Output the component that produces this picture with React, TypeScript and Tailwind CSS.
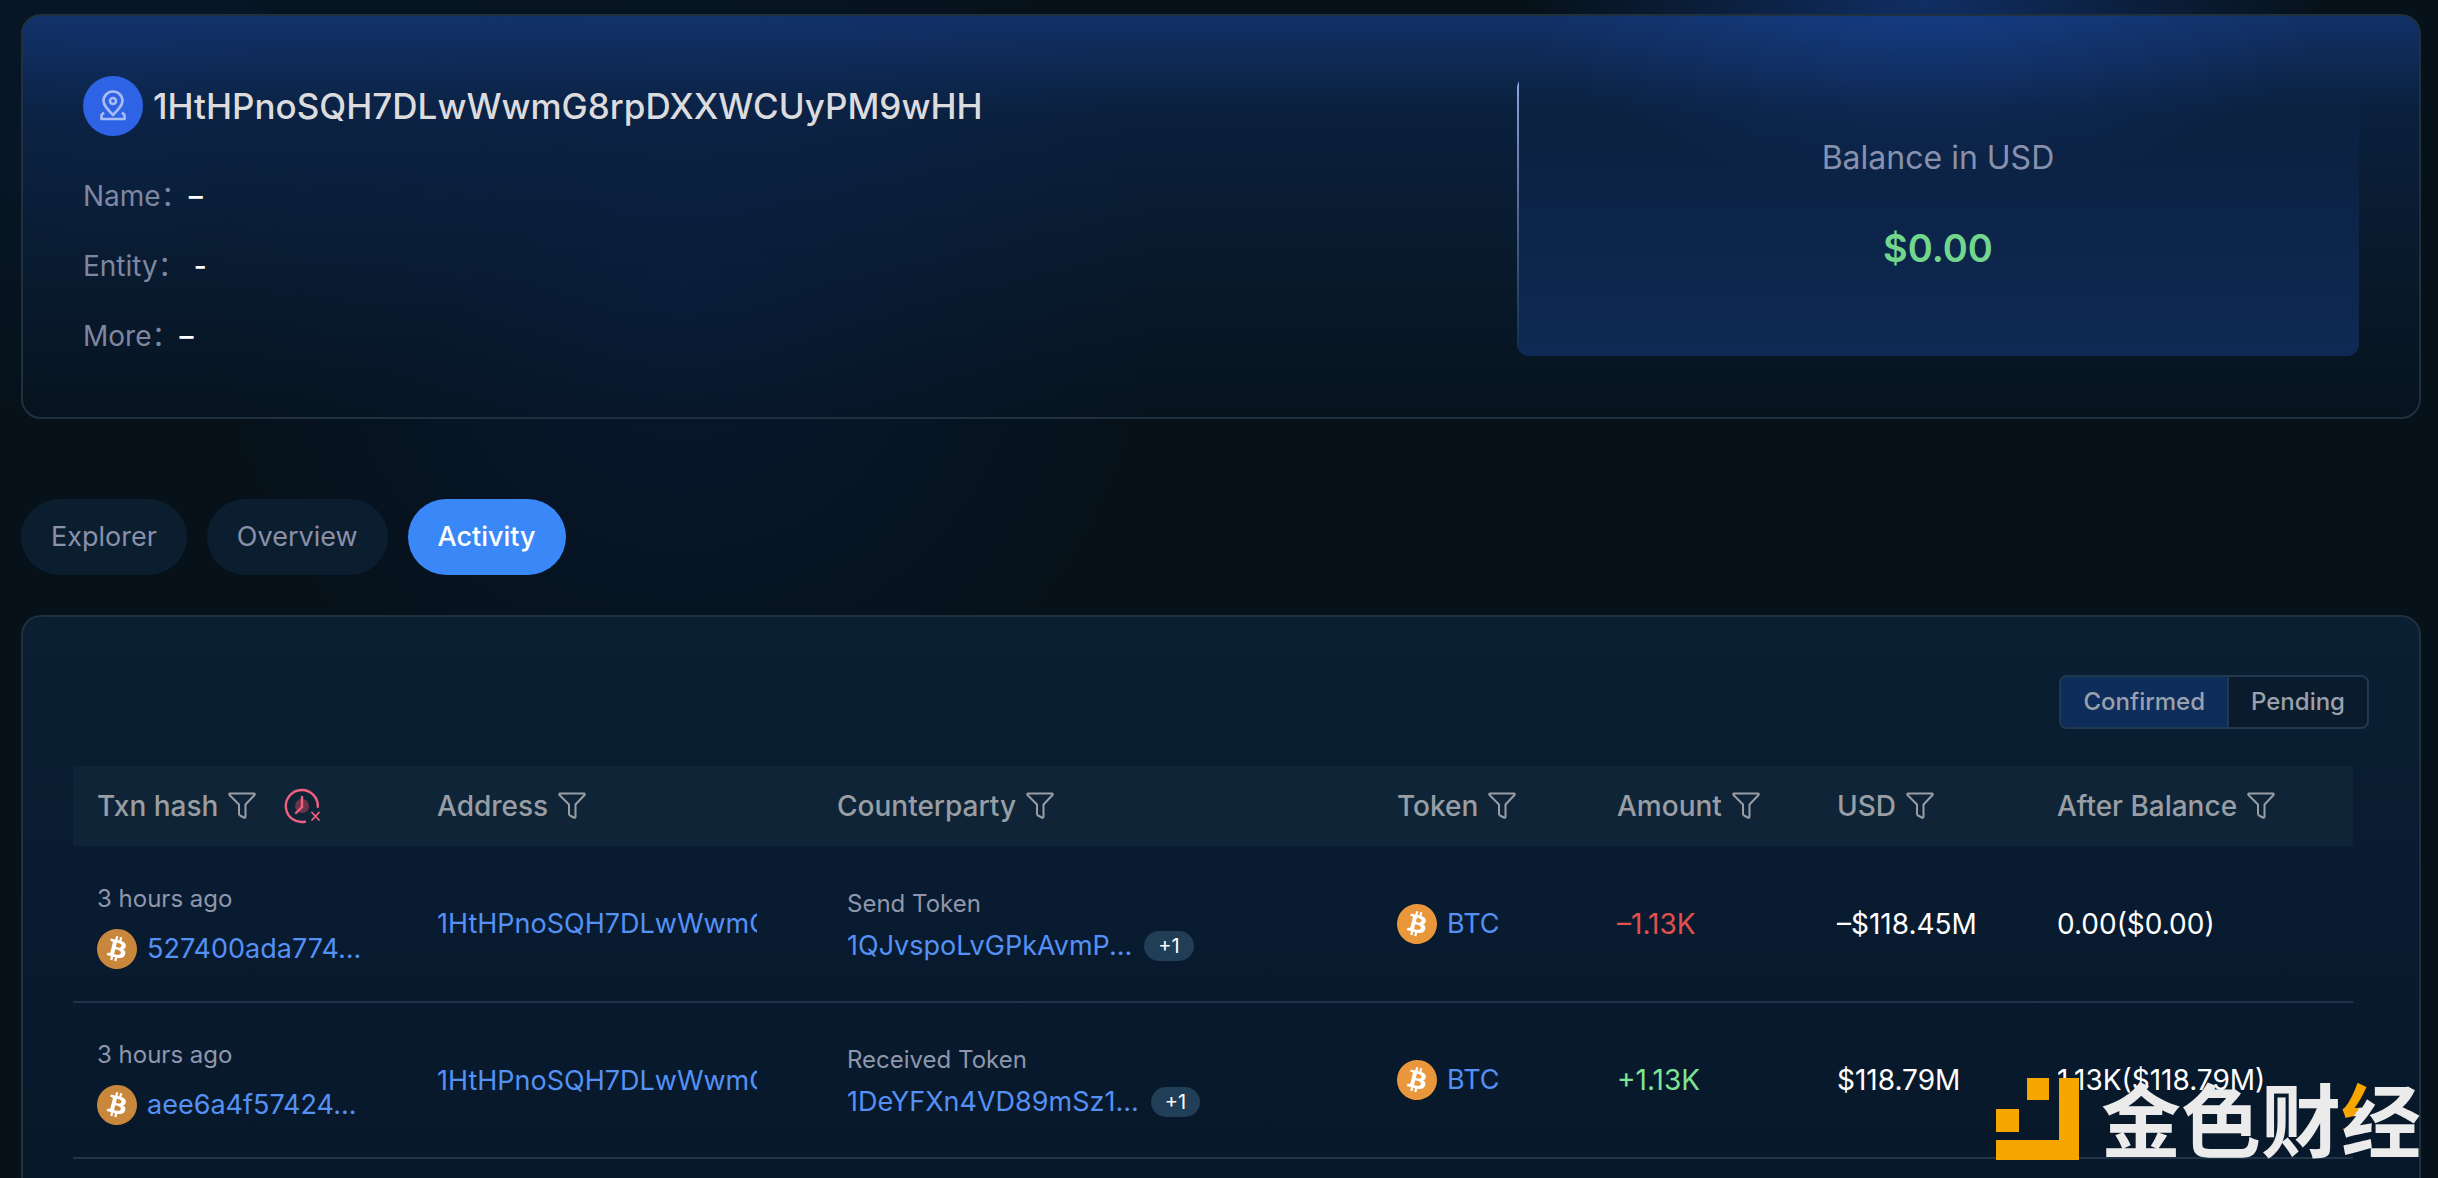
import type { ReactNode } from 'react'
import { SiBitcoin } from 'react-icons/si'

interface Txn {
  time: string;
  hash: string;
  address: string;
  action: string;
  counterparty: string;
  more: string;
  amount: string;
  usd: string;
  after: string;
}

const txns: Txn[] = [
  {
    time: "3 hours ago",
    hash: "527400ada774...",
    address: "1HtHPnoSQH7DLwWwmG8rpDXXWCUyPM9wHH",
    action: "Send Token",
    counterparty: "1QJvspoLvGPkAvmP...",
    more: "+1",
    amount: "–1.13K",
    usd: "–$118.45M",
    after: "0.00($0.00)",
  },
  {
    time: "3 hours ago",
    hash: "aee6a4f57424...",
    address: "1HtHPnoSQH7DLwWwmG8rpDXXWCUyPM9wHH",
    action: "Received Token",
    counterparty: "1DeYFXn4VD89mSz1...",
    more: "+1",
    amount: "+1.13K",
    usd: "$118.79M",
    after: "1.13K($118.79M)",
  },
];

const columns = [
  { title: "Txn hash", width: "w-[340px]" },
  { title: "Address", width: "w-[400px]" },
  { title: "Counterparty", width: "w-[560px]" },
  { title: "Token", width: "w-[220px]" },
  { title: "Amount", width: "w-[220px]" },
  { title: "USD", width: "w-[220px]" },
  { title: "After Balance", width: "w-[320px]" },
];

function FilterIcon() {
  return (
    <svg width="28" height="28" viewBox="0 0 28 28" fill="none" stroke="currentColor" strokeWidth="2" strokeLinejoin="round">
      <path d="M2 1.5H26C26.8 1.5 27 2.4 26.5 3L17.5 12.5V24.5C17.5 25.6 16.8 26 15.8 25.5L12 23.5C11.3 23.1 11 22.6 11 22V12.5L1.5 3C1 2.4 1.2 1.5 2 1.5Z" />
    </svg>
  );
}

function ClockOffIcon() {
  return (
    <svg width="38" height="36" viewBox="0 0 38 36" fill="none" stroke="#f0607f" strokeWidth="2.4" strokeLinecap="round">
      <circle cx="18" cy="18" r="7" fill="#6d3349" stroke="none" />
      <path d="M33.8 19A16 16 0 1 0 21 33.7" />
      <path d="M18 9V19L12 25" />
      <path d="M28 24.5L35 32M35 24.5L28 32" strokeWidth="1.8" />
    </svg>
  );
}

function PinIcon() {
  return (
    <svg width="28" height="32" viewBox="0 0 28 32" fill="none" stroke="#a9bdf3" strokeWidth="2.6" strokeLinejoin="round">
      <path d="M14 25C9 20 4.500 15.500 4.500 11A9.500 9.500 0 0 1 23.500 11C23.500 15.500 19 20 14 25Z" />
      <circle cx="14" cy="11" r="3" />
      <path d="M5 22.500L2.500 25V29H25.500V25L23 22.500" />
    </svg>
  );
}

function BtcIcon({ dim }: { dim?: boolean }) {
  return (
    <span className="flex size-10 shrink-0 rounded-full bg-white bg-clip-content p-px">
      <SiBitcoin className={`-m-px size-10 shrink-0 ${dim ? "text-[#c9873c]" : "text-[#ea963b]"}`} />
    </span>
  );
}

function InfoRow({ label, children }: { label: string; children: ReactNode }) {
  return (
    <div className="flex h-[70px] items-center text-[28px] text-[#7f87a0]">
      <dt>{label}：</dt>
      <dd className="font-medium text-white">{children}</dd>
    </div>
  );
}

function AddressCard() {
  return (
    <section className="flex items-start justify-between rounded-[20px] border-2 border-[#1f303f] bg-[linear-gradient(180deg,rgba(24,68,150,0.62)_0%,rgba(16,52,110,0.42)_24%,rgba(14,44,84,0.36)_55%,rgba(8,24,40,0.3)_100%)] px-[60px] pt-[60px] pb-[46px]">
      <div>
        <div className="flex items-center gap-[10px]">
          <span className="flex size-[60px] items-center justify-center rounded-full bg-[#2f63e6]">
            <PinIcon />
          </span>
          <h1 className="text-[35px] leading-10 font-medium text-[#dcdcdf]">1HtHPnoSQH7DLwWwmG8rpDXXWCUyPM9wHH</h1>
        </div>
        <dl className="pt-[25px]">
          <InfoRow label="Name">–</InfoRow>
          <InfoRow label="Entity"><span className="pl-2">-</span></InfoRow>
          <InfoRow label="More">–</InfoRow>
        </dl>
      </div>
      <div className="relative flex h-[280px] w-[37%] flex-col items-center overflow-hidden rounded-xl bg-[linear-gradient(180deg,rgba(14,40,84,0)_0%,rgba(14,40,84,0.7)_50%,#0e2a54_100%)] pt-[62px]">
        <span className="absolute top-0 left-0 h-full w-[2px] bg-linear-to-b from-[#8ea6e6] to-transparent" />
        <p className="text-[32px] leading-10 text-[#8791ad]">Balance in USD</p>
        <p className="pt-[42px] text-[38px] font-semibold text-[#72d68c]">$0.00</p>
      </div>
    </section>
  );
}

function Tabs() {
  const base = "h-[76px] rounded-full px-[30px] text-[27px]";
  return (
    <nav className="flex gap-5 pt-20 pb-10">
      <button className={`${base} bg-[#0a1e30] text-[#8a90a9]`}>Explorer</button>
      <button className={`${base} bg-[#0a1e30] text-[#8a90a9]`}>Overview</button>
      <button className={`${base} bg-[#3a88f8] font-medium text-white`}>Activity</button>
    </nav>
  );
}

function TxnRow({ txn }: { txn: Txn }) {
  const amountColor = txn.amount.startsWith("+") ? "text-[#7fe294]" : "text-[#e2504c]";
  const link = "text-[27px] text-[#5591f5]";
  return (
    <tr className="h-[156px] border-b-2 border-[#20344a]">
      <td className="pt-1 pl-6">
        <p className="text-[24px] leading-8 text-[#8f97ac]">{txn.time}</p>
        <div className="flex items-center gap-[10px] pt-[14px]">
          <BtcIcon dim />
          <a href="#" className={link}>{txn.hash}</a>
        </div>
      </td>
      <td className="pl-6">
        <div className="w-80 overflow-hidden whitespace-nowrap">
          <a href="#" className={link}>{txn.address}</a>
        </div>
      </td>
      <td className="pt-1 pl-[34px]">
        <p className="text-[24px] leading-8 text-[#8f97ac]">{txn.action}</p>
        <div className="flex items-center gap-3 pt-2">
          <a href="#" className={link}>{txn.counterparty}</a>
          <button className="h-[30px] rounded-full bg-[#203e55] px-[14px] text-[20px] leading-[30px] text-white">{txn.more}</button>
        </div>
      </td>
      <td className="pl-6">
        <div className="flex items-center gap-[10px]">
          <BtcIcon />
          <a href="#" className={link}>BTC</a>
        </div>
      </td>
      <td className={`pl-6 ${amountColor}`}>{txn.amount}</td>
      <td className="pl-6 text-white">{txn.usd}</td>
      <td className="pl-6 text-white">{txn.after}</td>
    </tr>
  );
}

function ActivityPanel() {
  return (
    <section className="flex-1 rounded-t-[20px] border-2 border-b-0 border-[#1f303f] bg-linear-to-b from-[#0a1f32] via-[#091b30] to-[#07182a] pt-[58px] pr-[66px] pb-4 pl-[50px]">
      <div className="-mr-4 flex justify-end pb-[37px]">
        <div className="flex h-[54px] overflow-hidden rounded-lg border-2 border-[#20394f] text-[24px] font-medium text-[#9aa1ad]">
          <button className="border-r-2 border-[#20394f] bg-[#0e2d5b] px-[22px]">Confirmed</button>
          <button className="bg-[#0a1b2d] px-[22px]">Pending</button>
        </div>
      </div>
      <table className="w-full table-fixed border-collapse text-left text-[28px] leading-9">
        <thead>
          <tr className="h-20 bg-[#0f2537] text-[#999ea5]">
            {columns.map((col, i) => (
              <th key={col.title} className={`${col.width} pl-6 font-medium`}>
                <div className="flex items-center gap-[10px]">
                  {col.title}
                  <button aria-label={`Filter ${col.title}`}><FilterIcon /></button>
                  {i === 0 && <button aria-label="Clear time" className="pl-[18px]"><ClockOffIcon /></button>}
                </div>
              </th>
            ))}
          </tr>
        </thead>
        <tbody>
          {txns.map((txn) => <TxnRow key={txn.hash} txn={txn} />)}
        </tbody>
      </table>
    </section>
  );
}

function Watermark() {
  return (
    <div className="pointer-events-none absolute right-[18px] bottom-[14px] flex w-[424px] items-end gap-[22px] overflow-hidden">
      <svg width="83" height="82" viewBox="0 0 83 82" fill="#f7a600" className="mb-1 shrink-0">
        <path d="M63 0H83V82H0V62H63ZM31 0H53V22H31ZM0 31H23V54H0Z" />
      </svg>
      <p className="text-[80px] leading-[84px] font-bold whitespace-nowrap text-[#ebebeb]">
        金色财<span className="bg-[linear-gradient(125deg,#f7a600_29%,#ebebeb_29%)] bg-clip-text text-transparent">经</span>
      </p>
    </div>
  );
}

export default function App() {
  return (
    <main className="relative flex min-h-screen w-full flex-col overflow-hidden bg-[#061119] bg-[radial-gradient(400px_190px_at_79%_0%,rgba(24,66,150,0.6),transparent),radial-gradient(480px_480px_at_28%_26%,rgba(10,34,84,0.4),transparent),radial-gradient(440px_340px_at_5%_8%,rgba(10,34,74,0.35),transparent)] pt-[14px] pr-[17px] pl-[21px] font-['Inter','Noto_Sans_CJK_SC',sans-serif]">
      <AddressCard />
      <Tabs />
      <ActivityPanel />
      <Watermark />
    </main>
  );
}
